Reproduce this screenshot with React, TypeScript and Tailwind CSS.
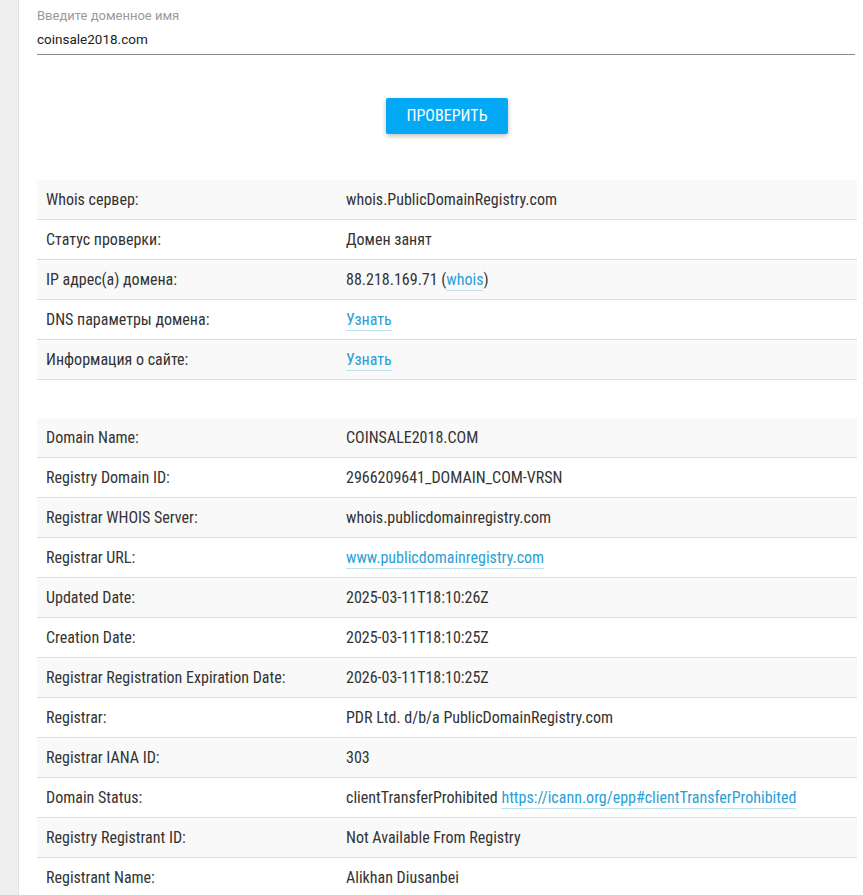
const font = { fontFamily: "'Roboto Condensed', Roboto, sans-serif" };

type Cell = { label: string; value: React.ReactNode };

const Link = ({ children }: { children: React.ReactNode }) => (
  <a className="text-[#2a9fd6] border-b border-[#bfe2f3] pb-[1px]">{children}</a>
);

const checkRows: Cell[] = [
  { label: "Whois сервер:", value: "whois.PublicDomainRegistry.com" },
  { label: "Статус проверки:", value: "Домен занят" },
  {
    label: "IP адрес(а) домена:",
    value: (
      <>
        88.218.169.71 (<Link>whois</Link>)
      </>
    ),
  },
  { label: "DNS параметры домена:", value: <Link>Узнать</Link> },
  { label: "Информация о сайте:", value: <Link>Узнать</Link> },
];

const whoisRows: Cell[] = [
  { label: "Domain Name:", value: "COINSALE2018.COM" },
  { label: "Registry Domain ID:", value: "2966209641_DOMAIN_COM-VRSN" },
  { label: "Registrar WHOIS Server:", value: "whois.publicdomainregistry.com" },
  { label: "Registrar URL:", value: <Link>www.publicdomainregistry.com</Link> },
  { label: "Updated Date:", value: "2025-03-11T18:10:26Z" },
  { label: "Creation Date:", value: "2025-03-11T18:10:25Z" },
  { label: "Registrar Registration Expiration Date:", value: "2026-03-11T18:10:25Z" },
  { label: "Registrar:", value: "PDR Ltd. d/b/a PublicDomainRegistry.com" },
  { label: "Registrar IANA ID:", value: "303" },
  {
    label: "Domain Status:",
    value: (
      <>
        clientTransferProhibited <Link>https://icann.org/epp#clientTransferProhibited</Link>
      </>
    ),
  },
  { label: "Registry Registrant ID:", value: "Not Available From Registry" },
  { label: "Registrant Name:", value: "Alikhan Diusanbei" },
];

const InfoTable = ({ rows }: { rows: Cell[] }) => (
  <div className="text-[16px] text-[#333]">
    {rows.map((row, index) => (
      <div
        key={index}
        className={`flex items-center h-[40px] border-b border-[#dddddd] ${
          index % 2 === 0 ? "bg-[#f9f9f9]" : "bg-white"
        }`}
      >
        <div className="w-[301px] shrink-0 px-[9px]">{row.label}</div>
        <div className="px-[8px]">{row.value}</div>
      </div>
    ))}
  </div>
);

export default function App() {
  return (
    <div className="flex h-[895px] overflow-hidden bg-white" style={font}>
      <div className="w-[19px] shrink-0 bg-[#efefef] border-r border-[#e2e2e2]" />
      <div className="flex-1 pl-[18px] pr-[6px]">
        <div className="pt-[7px] pr-[2px]" style={{ fontFamily: "Roboto, sans-serif" }}>
          <div className="text-[13px] text-[#9a9a9a] leading-[18px]">Введите доменное имя</div>
          <div className="mt-[4px] pb-[5px] text-[13.5px] text-[#222] leading-[20px] border-b border-[#8a8a8a]">
            coinsale2018.com
          </div>
        </div>
        <div className="flex justify-center pt-[43px] pb-[46px]">
          <button className="w-[122px] h-[36px] bg-[#03a9f4] text-white text-[16px] uppercase rounded-[2px] shadow-[0_2px_5px_rgba(0,0,0,0.25)]">
            Проверить
          </button>
        </div>
        <InfoTable rows={checkRows} />
        <div className="h-[38px]" />
        <InfoTable rows={whoisRows} />
      </div>
    </div>
  );
}
